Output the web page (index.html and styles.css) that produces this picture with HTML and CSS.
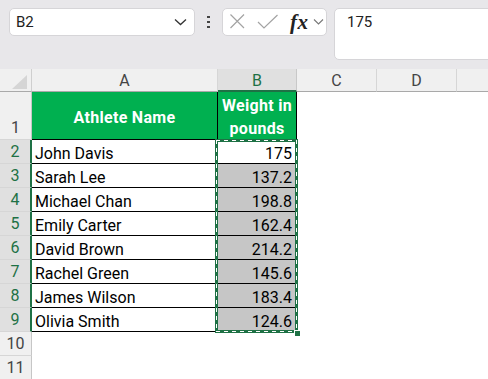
FILE: index.html
```html
<!DOCTYPE html>
<html>
<head>
<meta charset="utf-8">
<link rel="stylesheet" href="styles.css">
</head>
<body>
<div class="app">
  <div class="toolbar">
    <div class="namebox">
      <span class="nb-text">B2</span>
      <svg class="chev" width="13" height="8" viewBox="0 0 13 8"><path d="M1 1.5 L6.5 6.5 L12 1.5" fill="none" stroke="#333" stroke-width="1.3"/></svg>
    </div>
    <div class="dots"><i></i><i></i><i></i></div>
    <div class="fxbox">
      <svg width="103" height="26" viewBox="0 0 103 26">
        <path d="M7.5 5.5 L21 19 M21 5.5 L7.5 19" stroke="#a3a3a3" stroke-width="1.2" fill="none"/>
        <path d="M35 13 L41 19 L54.5 6" stroke="#a3a3a3" stroke-width="1.2" fill="none"/>
        <path d="M91 10.5 L95.5 15 L100 10.5" stroke="#777" stroke-width="1.1" fill="none"/>
      </svg>
      <span class="fx">fx</span>
    </div>
    <div class="formula">175</div>
  </div>
  <div class="grid">
    <div class="corner"><span class="tri"></span></div>
    <div class="ch">A</div>
    <div class="ch sel">B</div>
    <div class="ch">C</div>
    <div class="ch">D</div>
    <div class="ch last"></div>

    <div class="rh tall">1</div>
    <div class="c head">Athlete Name</div>
    <div class="c head">Weight in<br>pounds</div>
    <div class="e"></div><div class="e"></div><div class="e"></div>

    <div class="rh rsel">2</div><div class="c">John Davis</div><div class="c num">175</div><div class="e"></div><div class="e"></div><div class="e"></div>
    <div class="rh rsel">3</div><div class="c">Sarah Lee</div><div class="c num gray">137.2</div><div class="e"></div><div class="e"></div><div class="e"></div>
    <div class="rh rsel">4</div><div class="c">Michael Chan</div><div class="c num gray">198.8</div><div class="e"></div><div class="e"></div><div class="e"></div>
    <div class="rh rsel">5</div><div class="c">Emily Carter</div><div class="c num gray">162.4</div><div class="e"></div><div class="e"></div><div class="e"></div>
    <div class="rh rsel">6</div><div class="c">David Brown</div><div class="c num gray">214.2</div><div class="e"></div><div class="e"></div><div class="e"></div>
    <div class="rh rsel">7</div><div class="c">Rachel Green</div><div class="c num gray">145.6</div><div class="e"></div><div class="e"></div><div class="e"></div>
    <div class="rh rsel">8</div><div class="c">James Wilson</div><div class="c num gray">183.4</div><div class="e"></div><div class="e"></div><div class="e"></div>
    <div class="rh rsel">9</div><div class="c">Olivia Smith</div><div class="c num gray">124.6</div><div class="e"></div><div class="e"></div><div class="e"></div>
    <div class="rh">10</div><div class="e"></div><div class="e"></div><div class="e"></div><div class="e"></div><div class="e"></div>
    <div class="rh">11</div><div class="e"></div><div class="e"></div><div class="e"></div><div class="e"></div><div class="e"></div>

    <div class="selection"><div class="ants"></div></div>
    <div class="handle"></div>
  </div>
</div>
</body>
</html>
```
FILE: styles.css
```css
html, body {
  margin: 0;
  padding: 0;
  background: #ffffff;
}
.app {
  width: 488px;
  height: 379px;
  overflow: hidden;
  font-family: Roboto, "Liberation Sans", sans-serif;
}
.toolbar {
  height: 69px;
  box-sizing: border-box;
  background: #e8e7ea;
  display: flex;
  align-items: flex-start;
  padding: 8px 0 0 9px;
}
.namebox {
  width: 186px;
  height: 28px;
  box-sizing: border-box;
  background: #fff;
  border: 1px solid #d6d5d8;
  border-radius: 5px;
  display: flex;
  align-items: center;
  justify-content: space-between;
  padding: 0 7px 0 6px;
  font-size: 15px;
  color: #222;
}
.chev { display: block; }
.dots {
  width: 27px;
  height: 28px;
  display: flex;
  flex-direction: column;
  align-items: center;
  justify-content: center;
  gap: 2.5px;
}
.dots i {
  width: 2.5px;
  height: 2.5px;
  background: #444;
  display: block;
}
.fxbox {
  width: 105px;
  height: 28px;
  box-sizing: border-box;
  background: #fff;
  border: 1px solid #d6d5d8;
  border-radius: 5px;
  position: relative;
}
.fxbox svg { display: block; }
.fx {
  position: absolute;
  left: 67px;
  top: 0px;
  font-family: "Liberation Serif", serif;
  font-style: italic;
  font-weight: bold;
  font-size: 21px;
  line-height: 26px;
  color: #222;
  letter-spacing: 0.5px;
}
.formula {
  flex: 1;
  height: 52px;
  box-sizing: border-box;
  margin-left: 7px;
  margin-right: -10px;
  background: #fff;
  border: 1px solid #d6d5d8;
  border-radius: 5px;
  padding: 4px 0 0 12px;
  font-size: 15px;
  color: #222;
}
.grid {
  position: relative;
  display: grid;
  grid-template-columns: 32px 186px 79px 80px 80px 31px;
  grid-template-rows: 23px 48px repeat(10, 24px);
  background: #fff;
}
.corner {
  background: #f0f0f0;
  border-bottom: 1px solid #a9a9a9;
  border-right: 1px solid #cfcfcf;
  box-sizing: border-box;
  position: relative;
}
.tri {
  position: absolute;
  left: 12px;
  top: 6px;
  width: 0;
  height: 0;
  border-left: 15px solid transparent;
  border-bottom: 14px solid #d5d5d5;
}
.ch {
  background: #f0f0f0;
  border-bottom: 1px solid #a9a9a9;
  border-right: 1px solid #d6d6d6;
  box-sizing: border-box;
  display: flex;
  align-items: center;
  justify-content: center;
  font-size: 16px;
  color: #444;
  padding-top: 1px;
}
.ch.sel {
  background: #e0e0e0;
  color: #1e7145;
  border-bottom: 2px solid #1e7145;
  border-right: 1px solid #c8c8c8;
}
.ch.last { border-right: none; }
.rh {
  background: #f0f0f0;
  border-bottom: 1px solid #d6d6d6;
  border-right: 1px solid #c6c6c6;
  box-sizing: border-box;
  display: flex;
  align-items: center;
  justify-content: center;
  font-size: 16px;
  color: #444;
}
.rh.tall {
  align-items: flex-end;
  padding-bottom: 2px;
}
.rh.rsel {
  background: #e0e0e0;
  color: #1e7145;
  border-right: 2px solid #1e7145;
}
.c {
  box-sizing: border-box;
  border-right: 1px solid #000;
  border-bottom: 1px solid #000;
  display: flex;
  align-items: flex-end;
  padding: 0 3px 0 3px;
  font-size: 16px;
  color: #000;
  background: #fff;
  white-space: nowrap;
}
.c.head {
  background: #00b050;
  color: #fff;
  font-weight: bold;
  justify-content: center;
  align-items: center;
  text-align: center;
  line-height: 23px;
  letter-spacing: 0.3px;
  padding: 3px 1px 0 1px;
}
.c.num {
  justify-content: flex-end;
  padding-right: 4px;
}
.c.gray { background: #c6c6c6; }
.e { background: #fff; }
.selection {
  position: absolute;
  left: 215px;
  top: 70px;
  width: 83px;
  height: 194px;
  box-sizing: border-box;
  border: 3px solid #1e7145;
}
.ants {
  position: absolute;
  inset: -2px;
  background:
    repeating-linear-gradient(90deg, #fff 0 4px, transparent 4px 8px) left top / 100% 1px no-repeat,
    repeating-linear-gradient(90deg, #fff 0 4px, transparent 4px 8px) left bottom / 100% 1px no-repeat,
    repeating-linear-gradient(180deg, #fff 0 4px, transparent 4px 8px) left top / 1px 100% no-repeat,
    repeating-linear-gradient(180deg, #fff 0 4px, transparent 4px 8px) right top / 1px 100% no-repeat;
}
.handle {
  position: absolute;
  left: 294px;
  top: 261px;
  width: 5px;
  height: 5px;
  background: #1e7145;
  border: 1px solid #fff;
}
```
